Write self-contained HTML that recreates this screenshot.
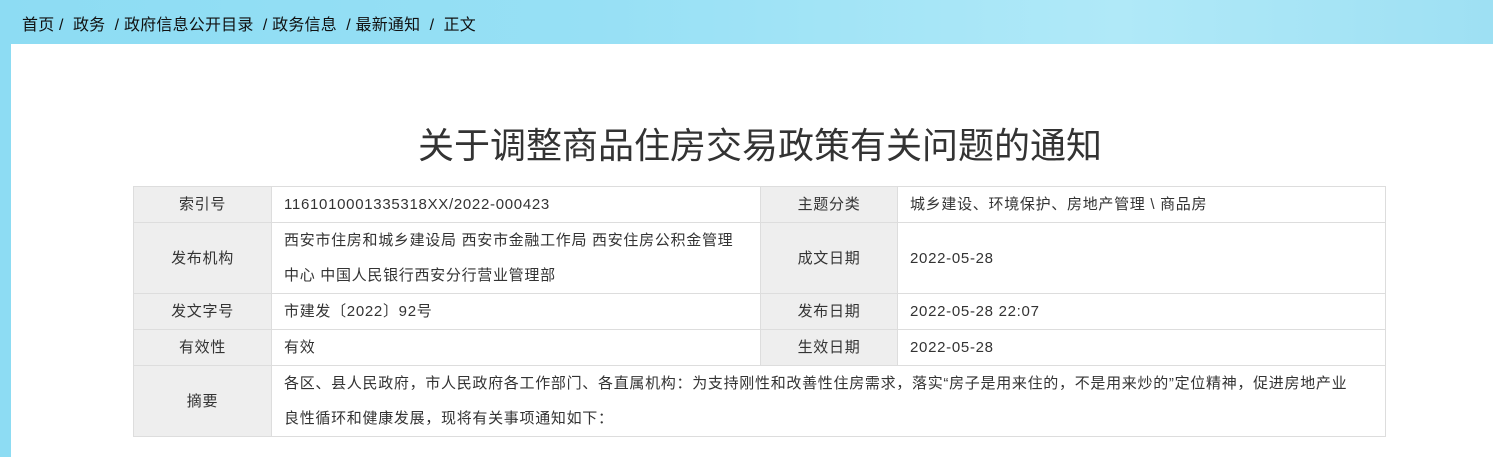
<!DOCTYPE html>
<html><head><meta charset="utf-8"><style>
body{margin:0;width:1493px;height:457px;overflow:hidden;font-family:"Liberation Sans","Noto Sans CJK SC",sans-serif;background:linear-gradient(90deg,#8ddcf3 0%,#97e0f5 40%,#b0e9f8 75%,#9ee0f3 100%);position:relative}
.crumb{position:absolute;left:22px;top:11px;font-size:16px;letter-spacing:0.2px;color:#111;white-space:pre}
.panel{position:absolute;left:11px;top:44px;width:1482px;height:413px;background:#fff}
h1{position:absolute;left:0;width:1520px;top:117px;margin:0;text-align:center;font-weight:normal;font-size:36px;color:#333;font-family:"Noto Sans CJK SC",sans-serif}
table{position:absolute;left:133px;top:186px;width:1253px;table-layout:fixed;border-collapse:collapse;font-size:15px;letter-spacing:0.7px;color:#333;font-family:"Liberation Sans","Noto Sans CJK SC",sans-serif}
td{border:1px solid #ddd;padding:0 12px;line-height:35px}
td.l{background:#eee;text-align:center}
</style></head><body>
<div class="crumb">首页 /  政务  / 政府信息公开目录  / 政务信息  / 最新通知  /  正文</div>
<div class="panel"></div>
<h1>关于调整商品住房交易政策有关问题的通知</h1>
<table>
<colgroup><col style="width:138px"><col style="width:489px"><col style="width:137px"><col></colgroup>
<tr style="height:36px"><td class="l">索引号</td><td>1161010001335318XX/2022-000423</td><td class="l">主题分类</td><td>城乡建设、环境保护、房地产管理 \ 商品房</td></tr>
<tr style="height:71px"><td class="l">发布机构</td><td>西安市住房和城乡建设局 西安市金融工作局 西安住房公积金管理中心 中国人民银行西安分行营业管理部</td><td class="l">成文日期</td><td>2022-05-28</td></tr>
<tr style="height:36px"><td class="l">发文字号</td><td>市建发〔2022〕92号</td><td class="l">发布日期</td><td>2022-05-28 22:07</td></tr>
<tr style="height:36px"><td class="l">有效性</td><td>有效</td><td class="l">生效日期</td><td>2022-05-28</td></tr>
<tr style="height:71px"><td class="l">摘要</td><td colspan="3">各区、县人民政府，市人民政府各工作部门、各直属机构：为支持刚性和改善性住房需求，落实“房子是用来住的，不是用来炒的”定位精神，促进房地产业<br>良性循环和健康发展，现将有关事项通知如下：</td></tr>
</table>
</body></html>
